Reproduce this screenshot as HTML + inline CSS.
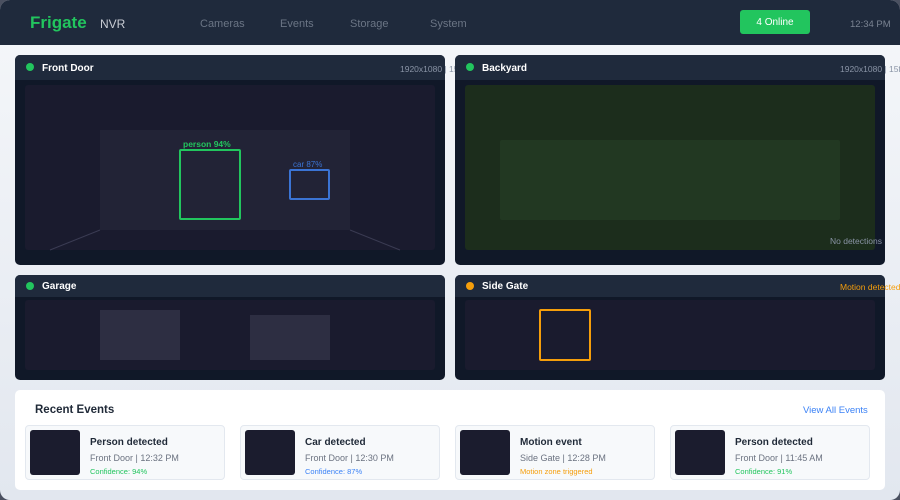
<!DOCTYPE html>
<html><head><meta charset="utf-8"><style>
*{margin:0;padding:0;box-sizing:border-box}
html,body{width:900px;height:500px;overflow:hidden;background:#4a5060}
body{font-family:"Liberation Sans",sans-serif;position:relative}
.page{position:absolute;left:0;top:0;width:900px;height:500px;border-radius:10px;overflow:hidden;background:linear-gradient(#f5f7fa,#e2e7ef)}
.hdr{position:absolute;left:0;top:0;width:900px;height:45px;background:#1f2a3c}
.a{position:absolute;white-space:nowrap}
.card{position:absolute;background:#101828;border-radius:5px}
.ch{position:absolute;left:0;top:0;right:0;background:#1f2a3c;border-radius:5px 5px 0 0}
.dot{position:absolute;width:8px;height:8px;border-radius:50%}
.tt{position:absolute;color:#fff;font-weight:bold;font-size:10px}
.view{position:absolute;border-radius:3px}
.ev{position:absolute;top:425px;width:200px;height:55px;background:#f7f9fb;border:1px solid #e3e8ef;border-radius:4px}
.th{position:absolute;left:4px;top:4px;width:50px;height:45px;background:#1b1c2e;border-radius:3px}
.e1{position:absolute;left:64px;top:11px;font-size:10px;font-weight:bold;color:#1f2937}
.e2{position:absolute;left:64px;top:27px;font-size:9px;color:#6b7280}
.e3{position:absolute;left:64px;top:41px;font-size:7.5px}
</style></head><body><div class="page">
<div class="hdr">
<div class="a" style="left:30px;top:13px;font-size:17px;font-weight:bold;color:#22c55e">Frigate</div>
<div class="a" style="left:100px;top:17px;font-size:12px;color:#c8ccd4">NVR</div>
<div class="a" style="left:200px;top:18px;font-size:11px;color:#6b7585">Cameras</div>
<div class="a" style="left:280px;top:18px;font-size:11px;color:#6b7585">Events</div>
<div class="a" style="left:350px;top:18px;font-size:11px;color:#6b7585">Storage</div>
<div class="a" style="left:430px;top:18px;font-size:11px;color:#6b7585">System</div>
<div class="a" style="left:740px;top:10px;width:70px;height:24px;background:#22c55e;border-radius:3px;color:#fff;font-size:10px;text-align:center;line-height:26px">4 Online</div>
<div class="a" style="left:850px;top:19px;font-size:9.5px;color:#7a8392">12:34 PM</div>
</div>

<div class="card" style="left:15px;top:55px;width:430px;height:210px">
<div class="ch" style="height:25px"></div>
<div class="dot" style="left:11px;top:8px;background:#22c55e"></div>
<div class="tt" style="left:27px;top:8px">Front Door</div>
<div class="a" style="left:385px;top:9px;font-size:8.5px;color:#8a94a6">1920x1080 | 15fps</div>
<div class="view" style="left:10px;top:30px;width:410px;height:165px;background:#1a1b2e"></div>
<div class="a" style="left:85px;top:75px;width:250px;height:100px;background:#222336"></div>
<svg class="a" style="left:0;top:0" width="430" height="210"><path d="M35 195 L85 175 M335 175 L385 195" stroke="#3a3b52" stroke-width="1"/></svg>
<div class="a" style="left:164px;top:94px;width:62px;height:71px;border:2px solid #22c55e;border-radius:2px"></div>
<div class="a" style="left:168px;top:84px;font-size:8.5px;font-weight:bold;color:#22c55e">person 94%</div>
<div class="a" style="left:274px;top:114px;width:41px;height:31px;border:2px solid #3b74d4;border-radius:2px"></div>
<div class="a" style="left:278px;top:105px;font-size:8px;color:#3b74d4">car 87%</div>
</div>

<div class="card" style="left:455px;top:55px;width:430px;height:210px">
<div class="ch" style="height:25px"></div>
<div class="dot" style="left:11px;top:8px;background:#22c55e"></div>
<div class="tt" style="left:27px;top:8px">Backyard</div>
<div class="a" style="left:385px;top:9px;font-size:8.5px;color:#8a94a6">1920x1080 | 15fps</div>
<div class="view" style="left:10px;top:30px;width:410px;height:165px;background:#1c2d1c"></div>
<div class="a" style="left:45px;top:85px;width:340px;height:80px;background:#223822;border-radius:2px"></div>
<div class="a" style="left:375px;top:181px;font-size:8.5px;color:#8a94a6">No detections</div>
</div>

<div class="card" style="left:15px;top:275px;width:430px;height:105px">
<div class="ch" style="height:22px"></div>
<div class="dot" style="left:11px;top:7px;background:#22c55e"></div>
<div class="tt" style="left:27px;top:6px">Garage</div>
<div class="view" style="left:10px;top:25px;width:410px;height:70px;background:#1a1b2e"></div>
<div class="a" style="left:85px;top:35px;width:80px;height:50px;background:#2d2e42"></div>
<div class="a" style="left:235px;top:40px;width:80px;height:45px;background:#2d2e42"></div>
</div>

<div class="card" style="left:455px;top:275px;width:430px;height:105px">
<div class="ch" style="height:22px"></div>
<div class="dot" style="left:11px;top:7px;background:#f59e0b"></div>
<div class="tt" style="left:27px;top:6px">Side Gate</div>
<div class="a" style="left:385px;top:7px;font-size:8.5px;color:#f59e0b">Motion detected</div>
<div class="view" style="left:10px;top:25px;width:410px;height:70px;background:#1a1b2e"></div>
<div class="a" style="left:84px;top:34px;width:52px;height:52px;border:2px solid #f59e0b;border-radius:2px"></div>
</div>

<div class="a" style="left:15px;top:390px;width:870px;height:100px;background:#fff;border-radius:5px"></div>
<div class="a" style="left:35px;top:404px;font-size:11.5px;font-weight:bold;color:#1f2937">Recent Events</div>
<div class="a" style="left:803px;top:405px;font-size:9.5px;color:#3b82f6">View All Events</div>

<div class="ev" style="left:25px"><div class="th"></div><div class="e1">Person detected</div><div class="e2">Front Door | 12:32 PM</div><div class="e3" style="color:#22c55e">Confidence: 94%</div></div>
<div class="ev" style="left:240px"><div class="th"></div><div class="e1">Car detected</div><div class="e2">Front Door | 12:30 PM</div><div class="e3" style="color:#3b82f6">Confidence: 87%</div></div>
<div class="ev" style="left:455px"><div class="th"></div><div class="e1">Motion event</div><div class="e2">Side Gate | 12:28 PM</div><div class="e3" style="color:#f59e0b">Motion zone triggered</div></div>
<div class="ev" style="left:670px"><div class="th"></div><div class="e1">Person detected</div><div class="e2">Front Door | 11:45 AM</div><div class="e3" style="color:#22c55e">Confidence: 91%</div></div>
</div></body></html>
